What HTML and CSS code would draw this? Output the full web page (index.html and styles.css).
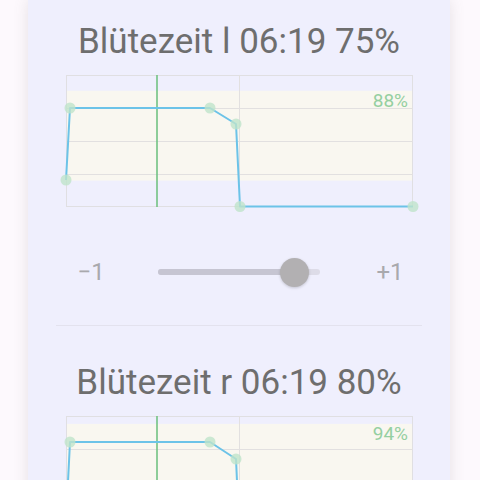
FILE: index.html
```html
<!DOCTYPE html>
<html lang="de">
<head>
<meta charset="utf-8">
<link rel="stylesheet" href="styles.css">
</head>
<body>
<div class="page">
  <div class="card">
    <section class="section">
      <h2 class="title">Blütezeit l 06:19 75%</h2>
      <svg class="chart" width="357" height="140" viewBox="0 0 357 140">
        <rect class="band" x="5" y="20.8" width="347" height="89.8"/>
        <rect class="frame" x="5.5" y="5.5" width="346" height="131"/>
        <line class="grid" x1="5" y1="38.5" x2="352" y2="38.5"/>
        <line class="grid" x1="5" y1="71.5" x2="352" y2="71.5"/>
        <line class="grid" x1="5" y1="104.5" x2="352" y2="104.5"/>
        <line class="grid" x1="178.5" y1="5" x2="178.5" y2="137"/>
        <line class="now" x1="96" y1="5" x2="96" y2="137"/>
        <polyline class="curve" points="5,110 9,38 149,38 175,54 179,136.5 352,136.5"/>
        <circle class="dot" cx="5" cy="110" r="5.5"/>
        <circle class="dot" cx="9" cy="38" r="5.5"/>
        <circle class="dot" cx="149" cy="38" r="5.5"/>
        <circle class="dot" cx="175" cy="54" r="5.5"/>
        <circle class="dot" cx="179" cy="136.5" r="5.5"/>
        <circle class="dot" cx="352" cy="136.5" r="5.5"/>
        <text class="pct" x="347" y="37" text-anchor="end">88%</text>
      </svg>
      <div class="slider-row">
        <span class="lbl">−1</span>
        <div class="track">
          <div class="fill" style="width: 137px"></div>
          <div class="thumb" style="left: 122px"></div>
        </div>
        <span class="lbl">+1</span>
      </div>
      <div class="divider"></div>
    </section>
    <section class="section">
      <h2 class="title">Blütezeit r 06:19 80%</h2>
      <svg class="chart" width="357" height="140" viewBox="0 0 357 140">
        <rect class="band" x="5" y="12.9" width="347" height="97.7"/>
        <rect class="frame" x="5.5" y="5.5" width="346" height="131"/>
        <line class="grid" x1="5" y1="38.5" x2="352" y2="38.5"/>
        <line class="grid" x1="5" y1="71.5" x2="352" y2="71.5"/>
        <line class="grid" x1="5" y1="104.5" x2="352" y2="104.5"/>
        <line class="grid" x1="178.5" y1="5" x2="178.5" y2="137"/>
        <line class="now" x1="96" y1="5" x2="96" y2="137"/>
        <polyline class="curve" points="5,110 9,31 149,31 175,48 179,136.5 352,136.5"/>
        <circle class="dot" cx="5" cy="110" r="5.5"/>
        <circle class="dot" cx="9" cy="31" r="5.5"/>
        <circle class="dot" cx="149" cy="31" r="5.5"/>
        <circle class="dot" cx="175" cy="48" r="5.5"/>
        <circle class="dot" cx="179" cy="136.5" r="5.5"/>
        <circle class="dot" cx="352" cy="136.5" r="5.5"/>
        <text class="pct" x="347" y="29" text-anchor="end">94%</text>
      </svg>
    </section>
  </div>
</div>
</body>
</html>
```

FILE: styles.css
```css
html, body {
  margin: 0;
  padding: 0;
  background: #fdf9fd;
  height: 480px;
  overflow: hidden;
  font-family: Roboto, "Liberation Sans", sans-serif;
}

.page {
  padding: 0 30px 0 28px;
}

.card {
  background: #efeffd;
  box-shadow: 0 0 14px rgba(110, 100, 100, 0.16);
  width: 422px;
  min-height: 480px;
  display: flex;
  flex-direction: column;
}

.section {
  display: flex;
  flex-direction: column;
  align-items: center;
  padding-top: 22px;
  margin-bottom: 15px;
}

.title {
  margin: 0;
  height: 40px;
  line-height: 40px;
  font-size: 35px;
  font-weight: 400;
  color: #6e6e6e;
  white-space: nowrap;
}

.chart {
  display: block;
  margin-top: 8px;
  overflow: visible;
}

.band { fill: #f9f7f0; }
.frame { fill: none; stroke: #e0dfe2; stroke-width: 1; }
.grid { stroke: #e2e0e0; stroke-width: 1; }
.now { stroke: #72c283; stroke-width: 1.6; }
.curve { fill: none; stroke: #6cc3e8; stroke-width: 2; stroke-linejoin: round; }
.dot { fill: #bfe3cb; opacity: 0.8; }
.pct {
  font-family: Roboto, "Liberation Sans", sans-serif;
  font-size: 19px;
  font-weight: 400;
  fill: #95cfa1;
}

.slider-row {
  margin-top: 42px;
  height: 40px;
  width: 323px;
  display: flex;
  align-items: center;
  justify-content: space-between;
}

.lbl {
  font-size: 24px;
  font-weight: 400;
  color: #a9a9ad;
  width: 24px;
  text-align: center;
}

.track {
  position: relative;
  width: 162px;
  height: 6px;
  border-radius: 3px;
  background: #dddce8;
}

.fill {
  height: 6px;
  border-radius: 3px;
  background: #c6c5d2;
}

.thumb {
  position: absolute;
  top: -11.5px;
  width: 29px;
  height: 29px;
  border-radius: 50%;
  background: #b2b0b2;
  box-shadow: 0 1px 3px rgba(0, 0, 0, 0.18);
}

.divider {
  margin-top: 33px;
  width: 366px;
  height: 1px;
  background: #e3e2ee;
}
```
